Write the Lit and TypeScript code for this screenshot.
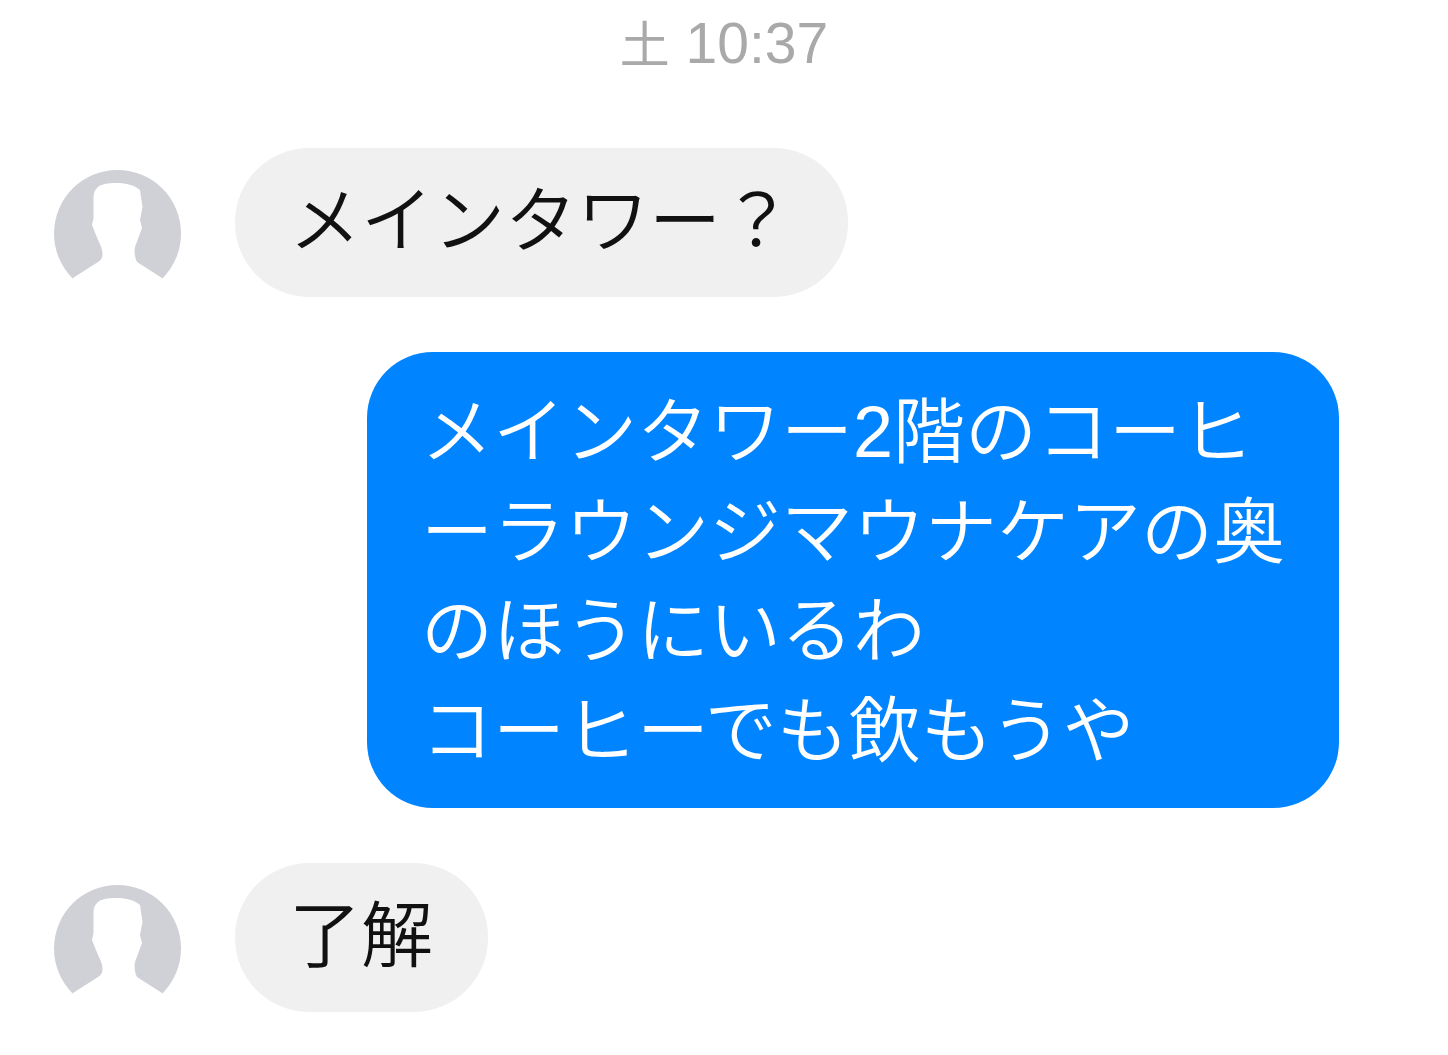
import { LitElement, css, html } from 'lit';
import { customElement } from 'lit/decorators.js';

const avatar = html`
  <svg class="avatar" viewBox="0 0 127 127" width="127" height="127">
    <circle cx="63.5" cy="63.5" r="63.5" fill="#d0d1d6"></circle>
    <path
      fill="#fff"
      d="M63 13C54 13 46 14 43 18C40 21 39.500 24 39.500 28L39.500 48L38 55L44 70C47 76 48.500 80 48.500 84C48.500 88 47 90 44 92L19 108L10 128L118 128L108 108L83 92C81 88 80 82 81 77L88 58L86 50L88.500 37L86 20C80 15 72 13 63 13Z"
    ></path>
  </svg>
`;

@customElement('app-root')
export class AppRoot extends LitElement {
  static override styles = css`
    :host {
      display: block;
      width: 1448px;
      height: 1055px;
      background: #fff;
      font-family: 'Liberation Sans', 'Noto Sans CJK JP', sans-serif;
      overflow: hidden;
    }

    .thread {
      display: flex;
      flex-direction: column;
      padding: 14px 54px 0;
    }

    .time {
      align-self: center;
      margin: 0 0 84px 0;
      height: 50px;
      line-height: 58px;
      font-size: 57px;
      color: #a9a9a9;
      white-space: nowrap;
    }

    .day {
      font-size: 50px;
    }

    .row {
      display: flex;
      align-items: flex-start;
      gap: 54px;
    }

    .row.me {
      justify-content: flex-end;
      margin: 55px 55px 55px 0;
    }

    .avatar {
      flex: none;
      margin-top: 22px;
    }

    .bubble {
      background: #f0f0f0;
      color: #111;
      border-radius: 74px;
      height: 149px;
      box-sizing: border-box;
      padding: 0 55px 16px 54px;
      display: flex;
      align-items: center;
      font-size: 72px;
      font-weight: 350;
      white-space: nowrap;
    }

    .bubble.out {
      background: #0084ff;
      color: #fff;
      display: block;
      height: auto;
      width: 972px;
      border-radius: 66px;
      padding: 31px 0 27px 54px;
      line-height: 99.5px;
    }
  `;

  override render() {
    return html`
      <div class="thread">
        <div class="time"><span class="day">土</span> 10:37</div>
        <div class="row">
          ${avatar}
          <div class="bubble">メインタワー？</div>
        </div>
        <div class="row me">
          <div class="bubble out">
            メインタワー2階のコーヒ<br />ーラウンジマウナケアの奥<br />のほうにいるわ<br />コーヒーでも飲もうや
          </div>
        </div>
        <div class="row">
          ${avatar}
          <div class="bubble">了解</div>
        </div>
      </div>
    `;
  }
}
